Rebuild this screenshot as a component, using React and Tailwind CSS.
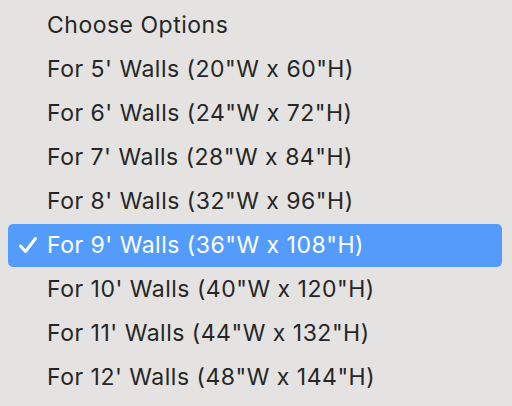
import React from 'react'

const options = [
  'Choose Options',
  `For 5' Walls (20"W x 60"H)`,
  `For 6' Walls (24"W x 72"H)`,
  `For 7' Walls (28"W x 84"H)`,
  `For 8' Walls (32"W x 96"H)`,
  `For 9' Walls (36"W x 108"H)`,
  `For 10' Walls (40"W x 120"H)`,
  `For 11' Walls (44"W x 132"H)`,
  `For 12' Walls (48"W x 144"H)`,
]

const selected = 5

const Check = () => (
  <svg width="20" height="18" viewBox="0 0 20 18" fill="none" className="text-white">
    <path d="M2.5 10 L7.5 15.5 L17.5 2.5" stroke="currentColor" strokeWidth="3" strokeLinecap="round" strokeLinejoin="round" />
  </svg>
)

export default function App() {
  return (
    <div className="w-[512px] h-[406px] bg-[#e4e3e2] overflow-hidden">
      <div
        className="w-[510px] h-[404px] bg-[#e4e3e2] rounded-b-[10px] pt-[3px] text-[23px] tracking-[0.5px] text-[#262626]"
        style={{ fontFamily: 'Inter, "Noto Sans", sans-serif' }}
      >
        {options.map((opt, i) => (
          <div key={opt} className="h-[44px] px-[8px] py-[0.5px]">
            <div
              className={
                i === selected
                  ? 'h-full w-[494px] rounded-[5px] bg-[#539cfc] text-white flex items-center'
                  : 'h-full w-[494px] flex items-center'
              }
            >
              <div className="w-[39px] flex justify-center pl-[1px]">
                {i === selected && <Check />}
              </div>
              <span className="leading-none">{opt}</span>
            </div>
          </div>
        ))}
      </div>
    </div>
  )
}
